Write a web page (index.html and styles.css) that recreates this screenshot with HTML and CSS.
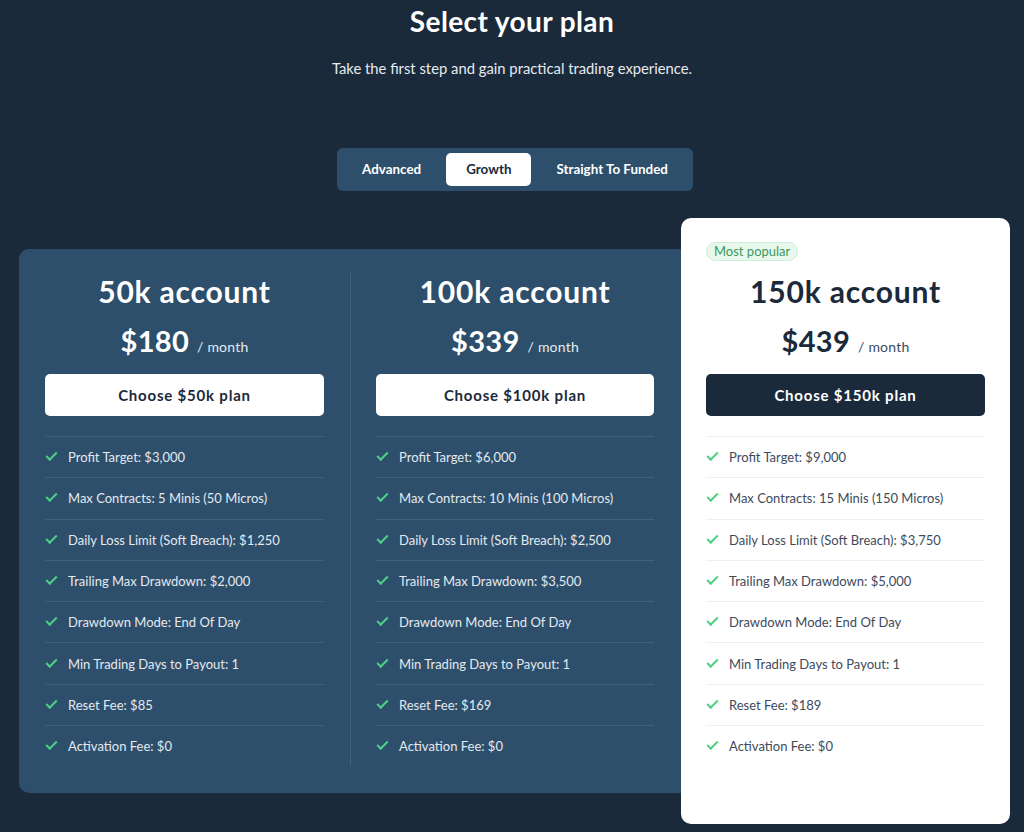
FILE: index.html
```html
<!DOCTYPE html>
<html lang="en">
<head>
    <meta charset="UTF-8">
    <meta name="viewport" content="width=device-width, initial-scale=1.0">
    <title>Select your plan</title>
    <link rel="stylesheet" href="styles.css">
</head>
<body>

    <div class="cabecera">
        <h1>Select your plan</h1>
        <p>Take the first step and gain practical trading experience.</p>
    </div>

    <div class="pestanas">
        <div class="pestana">Advanced</div>
        <div class="pestana activa">Growth</div>
        <div class="pestana">Straight To Funded</div>
    </div>

    <div class="planes">
        <div class="grupo">
            <div class="plan">
                <h2>50k account</h2>
                <div class="precio"><span class="cifra">$180</span><span class="mes">/ month</span></div>
                <button class="elegir">Choose $50k plan</button>
                <ul class="lista">
                    <li><span class="check"></span>Profit Target: $3,000</li>
                    <li><span class="check"></span>Max Contracts: 5 Minis (50 Micros)</li>
                    <li><span class="check"></span>Daily Loss Limit (Soft Breach): $1,250</li>
                    <li><span class="check"></span>Trailing Max Drawdown: $2,000</li>
                    <li><span class="check"></span>Drawdown Mode: End Of Day</li>
                    <li><span class="check"></span>Min Trading Days to Payout: 1</li>
                    <li><span class="check"></span>Reset Fee: $85</li>
                    <li><span class="check"></span>Activation Fee: $0</li>
                </ul>
            </div>
            <div class="plan segundo">
                <h2>100k account</h2>
                <div class="precio"><span class="cifra">$339</span><span class="mes">/ month</span></div>
                <button class="elegir">Choose $100k plan</button>
                <ul class="lista">
                    <li><span class="check"></span>Profit Target: $6,000</li>
                    <li><span class="check"></span>Max Contracts: 10 Minis (100 Micros)</li>
                    <li><span class="check"></span>Daily Loss Limit (Soft Breach): $2,500</li>
                    <li><span class="check"></span>Trailing Max Drawdown: $3,500</li>
                    <li><span class="check"></span>Drawdown Mode: End Of Day</li>
                    <li><span class="check"></span>Min Trading Days to Payout: 1</li>
                    <li><span class="check"></span>Reset Fee: $169</li>
                    <li><span class="check"></span>Activation Fee: $0</li>
                </ul>
            </div>
        </div>

        <div class="plan destacado">
            <span class="popular">Most popular</span>
            <h2>150k account</h2>
            <div class="precio"><span class="cifra">$439</span><span class="mes">/ month</span></div>
            <button class="elegir">Choose $150k plan</button>
            <ul class="lista">
                <li><span class="check"></span>Profit Target: $9,000</li>
                <li><span class="check"></span>Max Contracts: 15 Minis (150 Micros)</li>
                <li><span class="check"></span>Daily Loss Limit (Soft Breach): $3,750</li>
                <li><span class="check"></span>Trailing Max Drawdown: $5,000</li>
                <li><span class="check"></span>Drawdown Mode: End Of Day</li>
                <li><span class="check"></span>Min Trading Days to Payout: 1</li>
                <li><span class="check"></span>Reset Fee: $189</li>
                <li><span class="check"></span>Activation Fee: $0</li>
            </ul>
        </div>
    </div>

</body>
</html>
```

FILE: styles.css
```css
body {
    font-family: Lato, "Open Sans", sans-serif;
    background-color: #1b2a3b;
    color: #fff;
    margin: 0;
    height: 832px;
    overflow: hidden;
}

.cabecera {
    text-align: center;
    padding-top: 3px;
}

.cabecera h1 {
    font-size: 28px;
    font-weight: 700;
    margin: 0;
    line-height: 36px;
    letter-spacing: 0.4px;
}

.cabecera p {
    font-size: 14.8px;
    margin: 20px 0 0;
    color: #e6ebf0;
}

.pestanas {
    display: flex;
    gap: 5px;
    width: max-content;
    margin: 71px auto 0;
    padding: 5px;
    background-color: #2d4f6b;
    border-radius: 6px;
    position: relative;
    left: 3px;
}

.pestana {
    font-size: 13.4px;
    font-weight: 700;
    padding: 0 20px;
    height: 33px;
    line-height: 33px;
    border-radius: 5px;
    color: #fff;
}

.pestana.activa {
    background-color: #fff;
    color: #1b2a3b;
}

.planes {
    display: flex;
    align-items: flex-start;
    margin: 27px 0 0 19px;
}

.grupo {
    display: flex;
    margin-top: 31px;
    background-color: #2d4f6b;
    border-radius: 10px;
    padding: 24px 10px 27px 0;
}

.plan {
    width: 279px;
    padding: 0 26px;
    text-align: center;
}

.plan.segundo {
    width: 278px;
    padding-left: 25px;
    border-left: 1px solid rgba(255, 255, 255, 0.1);
}

.plan h2 {
    font-size: 30px;
    font-weight: 700;
    margin: 0;
    line-height: 36px;
    letter-spacing: 0.8px;
}

.precio {
    margin-top: 14px;
    height: 32px;
    display: flex;
    justify-content: center;
    align-items: baseline;
    gap: 8px;
}

.cifra {
    font-size: 29px;
    font-weight: 700;
    letter-spacing: 0.3px;
}

.mes {
    font-size: 14px;
    color: #e6ebf0;
    letter-spacing: 0.2px;
}

.elegir {
    display: block;
    width: 100%;
    height: 42px;
    margin-top: 19px;
    border: none;
    border-radius: 5px;
    background-color: #fff;
    color: #1b2a3b;
    font-family: inherit;
    font-size: 15px;
    font-weight: 700;
    letter-spacing: 0.8px;
    cursor: pointer;
}

.lista {
    list-style: none;
    margin: 20px 0 0;
    padding: 0;
    text-align: left;
}

.lista li {
    display: flex;
    align-items: center;
    height: 40.3px;
    border-top: 1px solid rgba(255, 255, 255, 0.1);
    font-size: 13px;
    color: #e3e9ef;
}

.check {
    width: 11px;
    height: 6px;
    margin: 0 11px 4px 1px;
    border-left: 2px solid #4fcf85;
    border-bottom: 2px solid #4fcf85;
    transform: rotate(-45deg);
    box-sizing: border-box;
    flex-shrink: 0;
}

.plan.destacado {
    position: relative;
    margin-left: -9px;
    width: 279px;
    padding: 24px 25px 58px 25px;
    background-color: #fff;
    border-radius: 10px;
    color: #1b2a3b;
}

.popular {
    display: table;
    font-size: 13px;
    color: #3c9a5d;
    background-color: #e8f8ed;
    border: 1px solid #c9eed5;
    border-radius: 10px;
    padding: 0 7px;
    line-height: 17px;
    margin-bottom: 12px;
}

.destacado .mes {
    color: #3d4b5c;
}

.destacado .elegir {
    background-color: #1b2a3b;
    color: #fff;
}

.destacado .lista li {
    border-top-color: #eef0f2;
    color: #3d4b5c;
}
```
